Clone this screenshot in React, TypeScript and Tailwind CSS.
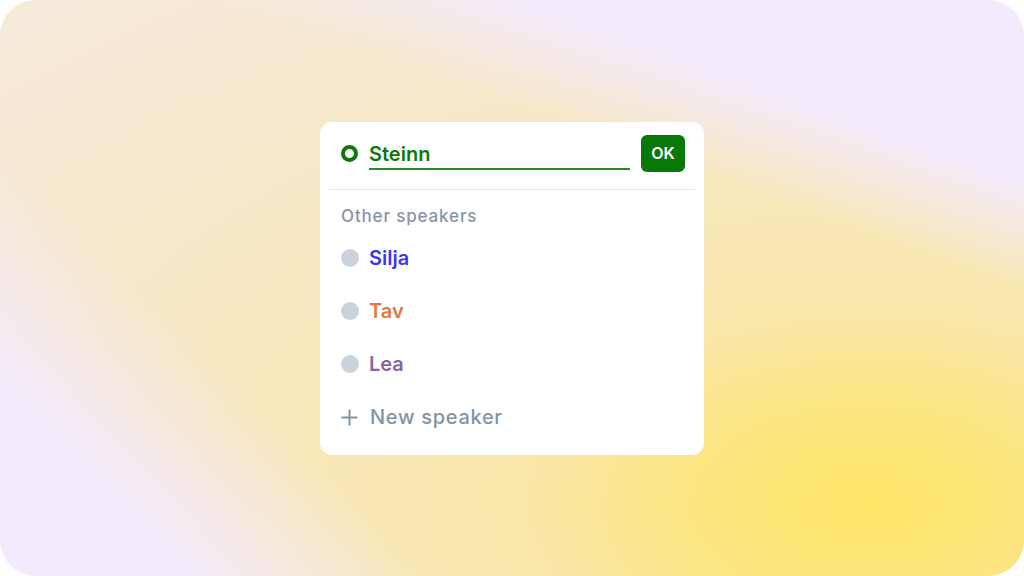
const speakers = [
  { name: 'Silja', color: 'text-[#3d35f2]' },
  { name: 'Tav', color: 'text-[#e8773f]' },
  { name: 'Lea', color: 'text-[#8d62a2]' },
]

export default function App() {
  return (
    <div className="w-[1024px] h-[576px] bg-white" style={{ fontFamily: "Inter, 'Noto Sans', sans-serif" }}>
      {/* soft yellow glow over lavender */}
      <div className="w-full h-full rounded-[36px] flex items-center justify-center bg-[linear-gradient(20deg,rgba(243,235,252,0)_69%,rgba(243,235,252,1)_81%),linear-gradient(225deg,rgba(243,235,252,0)_73%,rgba(243,235,252,1)_88%),radial-gradient(ellipse_340px_190px_at_870px_505px,rgba(253,229,104,1)_0%,rgba(253,229,104,0)_100%),radial-gradient(ellipse_1200px_640px_at_860px_500px,#fce48a_0%,#f9e7b0_35%,#f7e8c6_65%,#f6eada_100%)]">
        <div className="w-[384px] bg-white rounded-[12px] pt-[13px] pb-[11px]">
          {/* Current speaker input */}
          <div className="flex items-center pl-[21px] pr-[19px] pb-[17px]">
            <span className="w-[17px] h-[17px] rounded-full border-[4px] border-[#0b7a0b] shrink-0" />
            <div className="flex-1 ml-[11px] mr-[11px] border-b-2 border-[#2a8a2a] h-[34px] flex items-center pt-[4px]">
              <span className="text-[20px] font-semibold text-[#0b7a0b] leading-none">Steinn</span>
            </div>
            <button className="w-[44px] h-[37px] rounded-[6px] bg-[#087808] text-white text-[16px] font-semibold">
              OK
            </button>
          </div>
          <div className="mx-[9px] h-px bg-[#e6e8ec]" />

          <div className="pl-[21px] pt-[16px] pb-[6px] h-[42px] flex items-center">
            <span className="text-[17px] font-medium tracking-[0.05em] text-[#8794a5] leading-5">Other speakers</span>
          </div>

          {speakers.map((s) => (
            <div key={s.name} className="h-[53px] flex items-center pl-[21px]">
              <span className="w-[18px] h-[18px] rounded-full bg-[#cbd2db] shrink-0" />
              <span className={`ml-[10px] text-[20px] font-semibold ${s.color}`}>{s.name}</span>
            </div>
          ))}

          <div className="h-[53px] flex items-center pl-[21px]">
            <svg width="17" height="17" viewBox="0 0 17 17" className="shrink-0">
              <path d="M8.5 0.5v16M0.5 8.5h16" stroke="#8493a4" strokeWidth="2" fill="none" />
            </svg>
            <span className="ml-[12px] text-[20px] font-medium tracking-[0.035em] text-[#8493a4]">New speaker</span>
          </div>
        </div>
      </div>
    </div>
  )
}
